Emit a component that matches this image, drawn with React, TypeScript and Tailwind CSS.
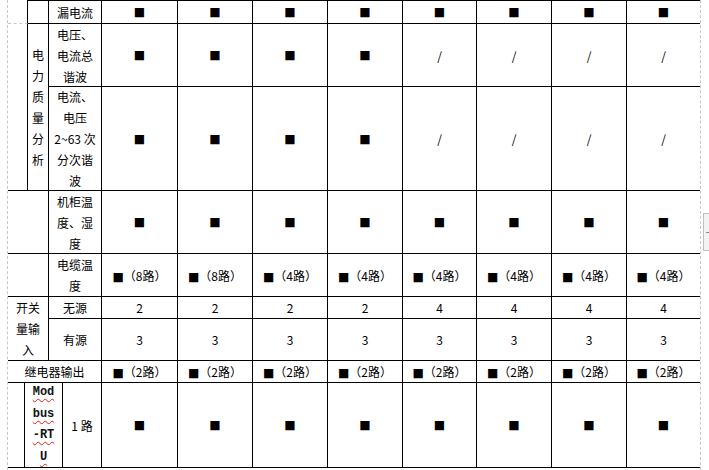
import React from "react";

const COLS = [
  "col-start-6",
  "col-start-7",
  "col-start-8",
  "col-start-9",
  "col-start-10",
  "col-start-11",
  "col-start-12",
  "col-start-13",
];
const ROWS = [
  "row-start-1",
  "row-start-2",
  "row-start-3",
  "row-start-4",
  "row-start-5",
  "row-start-6",
  "row-start-7",
  "row-start-8",
  "row-start-9",
];

const Sq = () => (
  <span className="font-['DejaVu_Sans',sans-serif] text-[12px] leading-none">■</span>
);

type V = "sq" | "/" | string;

const data: V[][] = [
  ["sq", "sq", "sq", "sq", "sq", "sq", "sq", "sq"],
  ["sq", "sq", "sq", "sq", "/", "/", "/", "/"],
  ["sq", "sq", "sq", "sq", "/", "/", "/", "/"],
  ["sq", "sq", "sq", "sq", "sq", "sq", "sq", "sq"],
  ["sq8", "sq8", "sq4", "sq4", "sq4", "sq4", "sq4", "sq4"],
  ["2", "2", "2", "2", "4", "4", "4", "4"],
  ["3", "3", "3", "3", "3", "3", "3", "3"],
  ["sq2", "sq2", "sq2", "sq2", "sq2", "sq2", "sq2", "sq2"],
  ["sq", "sq", "sq", "sq", "sq", "sq", "sq", "sq"],
];

function renderValue(v: V) {
  if (v === "sq") return <Sq />;
  if (v === "sq8" || v === "sq4" || v === "sq2") {
    const n = v.slice(2);
    return (
      <span className="whitespace-nowrap">
        <Sq />
        <span>（{n}路）</span>
      </span>
    );
  }
  return <span>{v}</span>;
}

const base =
  "flex items-center justify-center text-center border-black leading-[21px]";

export default function App() {
  return (
    <div className="relative h-[470px] w-[709px] overflow-hidden bg-white text-black font-['Noto_Sans_CJK_SC','Noto_Sans',sans-serif] text-[12px]">
      <div className="ml-[7px] h-[470px] w-[694px] border-x border-dashed border-[#c8c8c8]">
        <div className="grid grid-cols-[17px_3px_21px_14px_39px_76px_75px_75px_75px_74px_75px_75px_73px] grid-rows-[24px_63px_104px_63px_43px_22px_42px_22px_85px]">
          {/* Column A, rows 0 and 1-2 */}
          <div className="col-start-1 col-span-2 row-start-1 border-r border-r-black border-b border-b-[#c8c8c8] [border-bottom-style:dashed]" />
          <div className="col-start-1 col-span-2 row-start-2 row-span-2 border-r border-b border-black" />

          {/* Row 0 */}
          <div className={`${base} col-start-3 row-start-1 border-t border-r border-b`} />
          <div className={`${base} col-start-4 col-span-2 row-start-1 border-t border-r border-b px-[5px]`}>
            漏电流
          </div>

          {/* 电力质量分析 */}
          <div className={`${base} col-start-3 row-start-2 row-span-2 border-r border-b px-[4px]`}>
            <span>
              电<br />力<br />质<br />量<br />分<br />析
            </span>
          </div>
          <div className={`${base} col-start-4 col-span-2 row-start-2 border-r border-b px-[5px]`}>
            <span>
              电压、<br />电流总<br />谐波
            </span>
          </div>
          <div className={`${base} col-start-4 col-span-2 row-start-3 border-r border-b px-[5px]`}>
            <span>
              电流、<br />电压<br />2~63 次<br />分次谐<br />波
            </span>
          </div>

          {/* Row 3 */}
          <div className={`${base} col-start-1 col-span-3 row-start-4 border-r border-b`} />
          <div className={`${base} col-start-4 col-span-2 row-start-4 border-r border-b px-[5px]`}>
            <span>
              机柜温<br />度、湿<br />度
            </span>
          </div>

          {/* Row 4 */}
          <div className={`${base} col-start-1 col-span-3 row-start-5 border-r border-b`} />
          <div className={`${base} col-start-4 col-span-2 row-start-5 border-r border-b px-[5px]`}>
            <span>
              电缆温<br />度
            </span>
          </div>

          {/* Rows 5-6 开关量输入 */}
          <div className={`${base} col-start-1 col-span-3 row-start-6 row-span-2 border-r border-b px-[5px]`}>
            <span>
              开关<br />量输<br />入
            </span>
          </div>
          <div className={`${base} col-start-4 col-span-2 row-start-6 border-r border-b`}>无源</div>
          <div className={`${base} col-start-4 col-span-2 row-start-7 border-r border-b`}>有源</div>

          {/* Row 7 */}
          <div className={`${base} col-start-1 col-span-5 row-start-8 border-r border-b`}>
            继电器输出
          </div>

          {/* Row 8 */}
          <div className={`${base} col-start-1 row-start-9 border-r border-b`} />
          <div className={`${base} col-start-2 col-span-3 row-start-9 border-r border-b`}>
            <span className="font-['Liberation_Mono',monospace] font-bold text-[12px] leading-[21.5px] text-[#111]">
              <span className="underline decoration-wavy decoration-[#e02020] decoration-1 underline-offset-[3px]">Mod</span>
              <br />
              <span className="underline decoration-wavy decoration-[#e02020] decoration-1 underline-offset-[3px]">bus</span>
              <br />
              <span className="underline decoration-wavy decoration-[#e02020] decoration-1 underline-offset-[3px]">-RT</span>
              <br />
              <span className="underline decoration-wavy decoration-[#e02020] decoration-1 underline-offset-[3px]">U</span>
            </span>
          </div>
          <div className={`${base} col-start-5 row-start-9 border-r border-b`}>1 路</div>

          {/* Data cells */}
          {data.map((row, ri) =>
            row.map((v, ci) => (
              <div
                key={`${ri}-${ci}`}
                className={`${base} ${COLS[ci]} ${ROWS[ri]} border-b ${ci < 7 ? "border-r" : ""} ${ri === 0 ? "border-t" : ""}`}
              >
                {renderValue(v)}
              </div>
            ))
          )}
        </div>
      </div>

      {/* Right margin marker */}
      <div className="absolute left-[703px] top-[213px] h-[38px] w-[6px] border-y border-l border-[#c0c0c0] bg-[#f3f3f3]">
        <div className="absolute left-[2px] top-[18px] h-px w-[4px] bg-[#8a8a8a]" />
      </div>
    </div>
  );
}
